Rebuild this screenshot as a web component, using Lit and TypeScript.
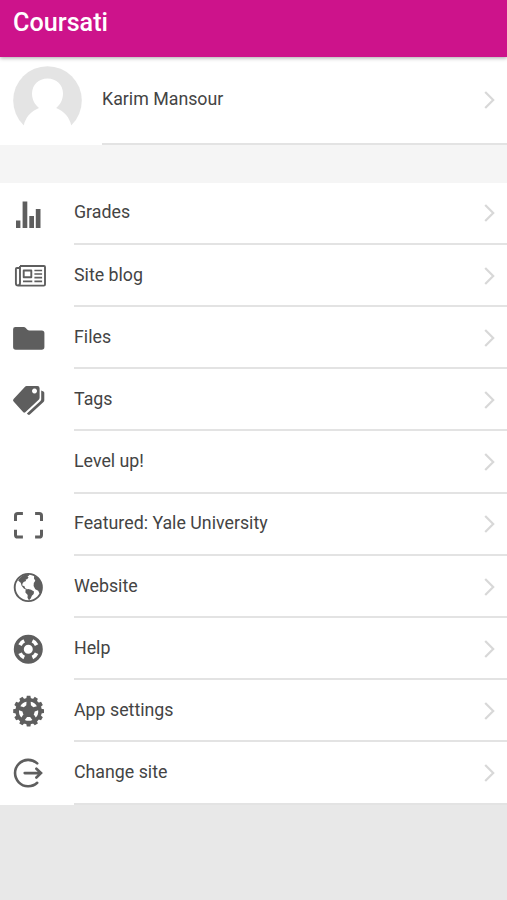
import { LitElement, html, svg, css } from "lit";
import { customElement, property } from "lit/decorators.js";

const teeth = Array.from({ length: 12 }, (_, i) => i * 30);
const spokes = [0, 72, 144, 216, 288];

const icons: Record<string, unknown> = {
  grades: svg`<path d="M8 26.4h4.4v7.6H8zM14.6 7.4h4.7V34h-4.7zM21.3 21.9H26V34h-4.7zM27.8 15.1h4.7V34h-4.700z"/>`,
  blog: svg`<path class="line" stroke-width="1.9" stroke-linejoin="round" d="M12 10h24q1 0 1 1v17.400q0 1.200-1.200 1.200H10.200q-2.300 0-2.300-2.300V13q0-1 1-1H12M12 10v17.100q0 2.400-2 2.400M15.700 14.500h7.600v6.800h-7.600z"/>
    <path class="line" stroke-width="1.600" d="M26.400 14.500h7.700M26.400 18h7.700M26.400 21.600h7.700M26.400 25.400h7.700M15 25.400h9.300"/>`,
  files: svg`<path d="M7.400 8.900h8.200q1.300 0 2.200 1l1.300 1.500q1 1.100 2.500 1.100h12.200q2.600 0 2.600 2.600v14q0 2.700-2.700 2.700H7.800q-2.700 0-2.700-2.700V11.300q0-2.400 2.300-2.400z"/>`,
  tags: svg`<path fill-rule="evenodd" d="M18.600 6h10.800q2.200 0 2.200 2.200v9.600q0 1.200-.9 2L17.300 32.200q-1 .9-2 0L5.600 21.600q-1.200-1.300 0-2.500L16.800 6.900q.8-.9 1.800-.9zM26.500 8.500a2.500 2.500 0 1 0 .01 0z"/>
    <path d="M33.200 10.400l2.200 1q.9.400.9 1.500v7.300q0 1-.8 1.800L21.900 34.500q-1 .9-2 0l-1-1 13.300-12.200q1-.9 1-2.100z"/>`,
  frame: svg`<path class="line" stroke-width="3" d="M7.500 16V10.800q0-2.200 2.200-2.200h5.200M27.100 8.600h4.200q2.200 0 2.200 2.200V16M33.500 24.700v5.200q0 2.200-2.200 2.200h-4.200M14.900 32.100H9.700q-2.200 0-2.200-2.200v-5.200"/>`,
  globe: svg`<circle class="line" stroke-width="1.900" cx="20.300" cy="20.500" r="13.600"/>
    <path d="M11.800 11Q15.600 7.200 20.700 7l.5 1.500-1.700.7 1 1.300-1.400 1.700-1.400.2.300 1.700-2.400.9-1.300 1.900.2 1.800 1.800.3.900 2.200 1.600.9-.5.7-2.500-1.300-2.200-2.800-.9-3-2.600-2.300zM17.600 22.700l2.500-.8 3 .8 2.900 1.800-.3 2.500-1.800 1.700-1.200 2.900-1.700 1.700-1.500-2.500.2-2.800-2.300-2.600zM26.200 8.400q4.100 2 6.200 6 2.300 4.800.9 10.200l-1.800 1.900-1.300-2.800-2.900-1.500-1.700-3.200.2-3 1.500-2.300-1.300-2.200z"/>`,
  help: svg`<circle class="line" stroke-width="10" cx="20.300" cy="20.200" r="9.500"/>
    ${[45, 135, 225, 315].map((a) => svg`<path class="cut" transform="rotate(${a} 20.3 20.2)" d="M16.700 9.700q3.600-1.500 7.200 0l-1.300 3.500q-2.300-.8-4.600 0z"/>`)}`,
  settings: svg`<circle cx="20.600" cy="20.100" r="13.200"/>
    ${teeth.map((a) => svg`<path transform="rotate(${a} 20.6 20.1)" d="M18.200 8l.6-3.300h3.600l.6 3.300z"/>`)}
    ${spokes.map((a) => svg`<path class="cut" transform="rotate(${a + 36} 20.6 20.1)" d="M16.800 11.300q3.800-1.900 7.600 0l-2.300 2.800h-3z"/>`)}`,
  exit: svg`<path class="line" stroke-width="2.600" stroke-linecap="round" d="M29.200 10.400A13.200 13.200 0 1 0 29.200 29.800M16.700 20.100h15.800M28.400 15.700l4.600 4.400-4.600 4.400"/>`,
};

const entries: [string, string][] = [
  ["grades", "Grades"],
  ["blog", "Site blog"],
  ["files", "Files"],
  ["tags", "Tags"],
  ["", "Level up!"],
  ["frame", "Featured: Yale University"],
  ["globe", "Website"],
  ["help", "Help"],
  ["settings", "App settings"],
  ["exit", "Change site"],
];

const chevron = html`<svg class="chevron" viewBox="0 0 14 20"><path d="M2.200 2l8 8-8 8" /></svg>`;

const shared = css`
  .body {
    flex: 1;
    display: flex;
    align-items: center;
    justify-content: space-between;
    box-sizing: border-box;
    border-bottom: 2px solid #e3e3e3;
    padding-right: 10px;
    color: #444;
    font-size: 17.8px;
    line-height: 22px;
  }
  .chevron {
    width: 14px;
    height: 20px;
    fill: none;
    stroke: #d8d8d8;
    stroke-width: 2.2;
  }
`;

@customElement("menu-row")
class MenuRow extends LitElement {
  @property() icon = "";
  @property() label = "";

  static styles = [
    shared,
    css`
      :host {
        display: flex;
        flex: 1;
        background: #fff;
      }
      .slot {
        width: 66px;
        padding-left: 8px;
        display: flex;
        align-items: center;
      }
      .icon {
        width: 40px;
        height: 40px;
        fill: #5e5e5e;
      }
      .line {
        fill: none;
        stroke: #5e5e5e;
      }
      .cut {
        fill: #fff;
      }
      .label {
        padding-bottom: 0.5px;
      }
      .chevron {
        margin-top: 1.5px;
      }
    `,
  ];

  render() {
    return html`
      <div class="slot"><svg class="icon" viewBox="0 0 40 40">${icons[this.icon]}</svg></div>
      <div class="body"><span class="label">${this.label}</span>${chevron}</div>
    `;
  }
}

@customElement("app-root")
class AppRoot extends LitElement {
  static styles = [
    shared,
    css`
      :host {
        display: flex;
        flex-direction: column;
        height: 900px;
        overflow: hidden;
        background: #e8e8e8;
        font-family: Roboto, sans-serif;
      }
      .header {
        position: relative;
        box-sizing: border-box;
        height: 57px;
        padding: 8px 13px 0;
        background: #cd138b;
        box-shadow: 0 1px 4px rgba(0, 0, 0, 0.35);
        color: #fff;
        font-size: 25.2px;
        font-weight: 500;
        line-height: 29px;
      }
      .profile {
        display: flex;
        height: 88px;
        background: #fff;
      }
      .photo {
        width: 89px;
        padding: 9px 0 0 13px;
      }
      .avatar {
        display: block;
        width: 69px;
        height: 69px;
      }
      .name {
        padding-bottom: 3px;
      }
      .profile .chevron {
        margin-bottom: 1px;
      }
      .gap {
        height: 37.5px;
        background: #f5f5f5;
      }
      .menu {
        display: flex;
        flex-direction: column;
        height: 622px;
      }
    `,
  ];

  render() {
    return html`
      <div class="header">Coursati</div>
      <div class="profile">
        <div class="photo">
          <svg class="avatar" viewBox="0 0 69 69">
            <circle cx="34.500" cy="34.500" r="34.300" fill="#e4e4e4" />
            <path
              fill="#fff"
              d="M34.500 12.500C43.500 12.500 50 19 50 27.500c0 6-2.600 11-6.800 14.500C51.500 45.500 56.500 51.500 58.300 59.500L58 69H11l-.300-9.500C12.500 51.500 17.500 45.500 26 42c-4.300-3.500-7-8.500-7-14.500C19 19 25.500 12.500 34.500 12.500z"
            />
          </svg>
        </div>
        <div class="body"><span class="name">Karim Mansour</span>${chevron}</div>
      </div>
      <div class="gap"></div>
      <div class="menu">
        ${entries.map(([icon, label]) => html`<menu-row .icon=${icon} .label=${label}></menu-row>`)}
      </div>
    `;
  }
}
